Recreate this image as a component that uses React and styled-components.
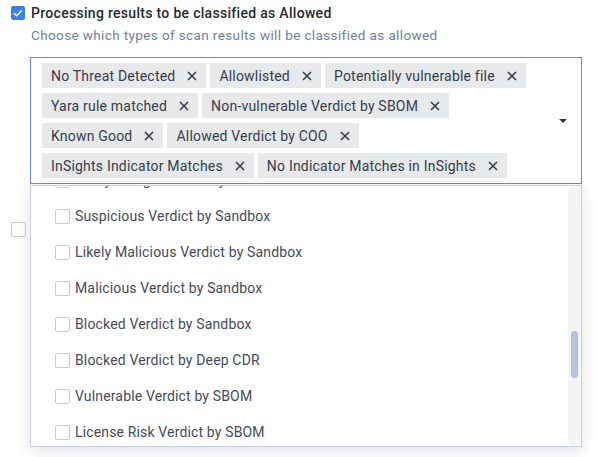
import { useLayoutEffect, useRef } from "react";
import styled, { createGlobalStyle } from "styled-components";

const GlobalStyle = createGlobalStyle`
  body {
    margin: 0;
    background: #ffffff;
    font-family: Roboto, "Liberation Sans", Arial, sans-serif;
  }
`;

const Page = styled.div`
  min-height: 100vh;
  box-sizing: border-box;
  padding: 6px 14px 0 11px;
  display: flex;
  flex-direction: column;
`;

const Section = styled.div`
  display: flex;
  flex-direction: column;
`;

const CheckRow = styled.label`
  display: flex;
  align-items: center;
  gap: 6px;
  height: 14px;
`;

const Box = styled.span`
  box-sizing: border-box;
  width: ${p => p.size}px;
  height: ${p => p.size}px;
  flex: none;
  border-radius: 2px;
  display: flex;
  align-items: center;
  justify-content: center;
  background: ${p => (p.checked ? "#3f7de9" : "#ffffff")};
  border: 1px solid ${p => (p.checked ? "#3f7de9" : "#c9cbcf")};
`;

const Title = styled.span`
  font-size: 14px;
  font-weight: 500;
  letter-spacing: 0.3px;
  color: #262a33;
`;

const Hint = styled.div`
  margin: 7px 0 0 20px;
  font-size: 13.5px;
  letter-spacing: 0.38px;
  color: #6f80a3;
`;

const SelectWrap = styled.div`
  position: relative;
  margin: 14px 0 0 19px;
`;

const SelectBox = styled.div`
  display: flex;
  border: 1px solid #5b8def;
  background: #ffffff;
`;

const TagArea = styled.div`
  flex: 1;
  display: flex;
  flex-wrap: wrap;
  gap: 5px 4px;
  padding: 5px 0 5px 11px;
`;

const Tag = styled.span`
  display: flex;
  align-items: center;
  gap: 12px;
  height: 25px;
  padding: 0 9px;
  background: #e8e9eb;
  color: #353d4e;
  font-size: 14px;
  letter-spacing: 0.2px;
  white-space: nowrap;
`;

const ArrowCell = styled.div`
  width: 36px;
  display: flex;
  align-items: center;
  justify-content: center;
`;

const Caret = styled.span`
  width: 0;
  height: 0;
  border-left: 4px solid transparent;
  border-right: 4px solid transparent;
  border-top: 4px solid #2e323a;
`;

const Menu = styled.div`
  position: absolute;
  top: 100%;
  left: 0;
  right: 0;
  margin-top: 1px;
  height: 260px;
  display: flex;
  background: #ffffff;
  border: 1px solid #c6cee2;
  box-shadow: 0 4px 14px rgba(40, 50, 70, 0.14);
  z-index: 2;
`;

const Viewport = styled.div`
  flex: 1;
  overflow: hidden;
`;

const Option = styled.div`
  display: flex;
  align-items: center;
  gap: 5px;
  height: 36px;
  padding-left: 24px;
  font-size: 14px;
  letter-spacing: 0.15px;
  color: #464c5a;
  white-space: nowrap;
`;

const Track = styled.div`
  width: 12px;
  margin: 1px 1px 1px 0;
  border-radius: 6px;
  background: #f2f4f8;
  display: flex;
  justify-content: center;
`;

const Thumb = styled.div`
  width: 7px;
  height: 47px;
  border-radius: 4px;
  background: #b6c0df;
`;

const Second = styled(Section)`
  margin-top: 38px;
`;

const Cross = () => (
  <svg width="10" height="10" viewBox="0 0 10 10">
    <path d="M1 1L9 9M9 1L1 9" stroke="#353d4e" strokeWidth="1.6" />
  </svg>
);

const Tick = () => (
  <svg width="10" height="8" viewBox="0 0 10 8">
    <path d="M1 4.2L3.7 6.8L9 1.2" stroke="#ffffff" strokeWidth="1.5" fill="none" />
  </svg>
);

const tags = [
  "No Threat Detected",
  "Allowlisted",
  "Potentially vulnerable file",
  "Yara rule matched",
  "Non-vulnerable Verdict by SBOM",
  "Known Good",
  "Allowed Verdict by COO",
  "InSights Indicator Matches",
  "No Indicator Matches in InSights",
];

const options = [
  "Likely Benign Verdict by Sandbox",
  "Suspicious Verdict by Sandbox",
  "Likely Malicious Verdict by Sandbox",
  "Malicious Verdict by Sandbox",
  "Blocked Verdict by Sandbox",
  "Blocked Verdict by Deep CDR",
  "Vulnerable Verdict by SBOM",
  "License Risk Verdict by SBOM",
  "Blocked Verdict by COO",
];

const App = () => {
  const viewRef = useRef(null);

  useLayoutEffect(() => {
    if (viewRef.current) viewRef.current.scrollTop = 24;
  }, []);

  return (
    <>
      <GlobalStyle />
      <Page>
        <Section>
          <CheckRow>
            <Box size={14} checked><Tick /></Box>
            <Title>Processing results to be classified as Allowed</Title>
          </CheckRow>
          <Hint>Choose which types of scan results will be classified as allowed</Hint>
          <SelectWrap>
            <SelectBox>
              <TagArea>
                {tags.map(t => (
                  <Tag key={t}>{t}<Cross /></Tag>
                ))}
              </TagArea>
              <ArrowCell><Caret /></ArrowCell>
            </SelectBox>
            <Menu>
              <Viewport ref={viewRef}>
                {options.map(o => (
                  <Option key={o}><Box size={15} />{o}</Option>
                ))}
              </Viewport>
              <Track>
                <Thumb style={{ marginTop: 144 }} />
              </Track>
            </Menu>
          </SelectWrap>
        </Section>
        <Second>
          <CheckRow>
            <Box size={15} />
            <Title>Processing results to be classified as Blocked</Title>
          </CheckRow>
        </Second>
      </Page>
    </>
  );
};

export default App;
